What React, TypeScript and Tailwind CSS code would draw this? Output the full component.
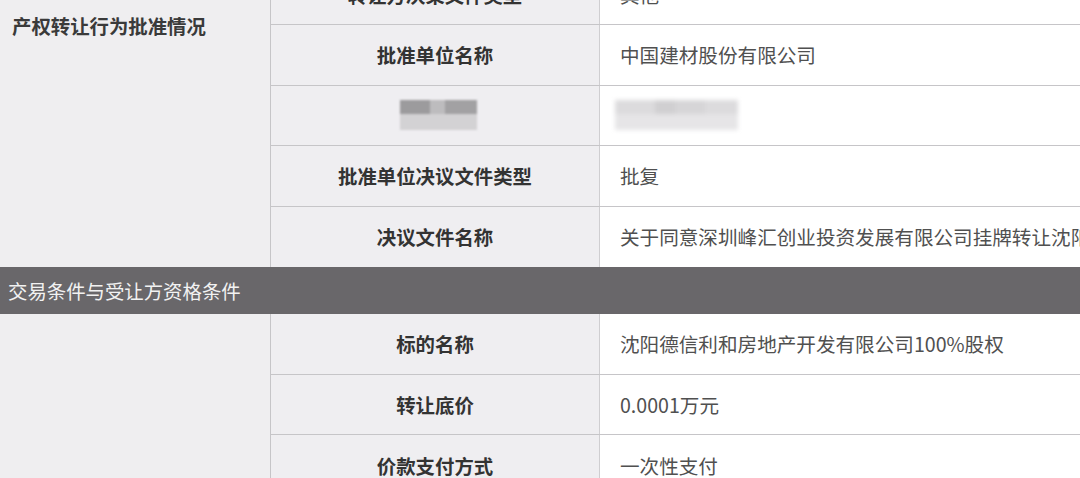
import React from 'react';

interface Row {
  label: string;
  value?: string;
  blurred?: boolean;
}

const approvalRows: Row[] = [
  { label: '转让方决策文件类型', value: '其他' },
  { label: '批准单位名称', value: '中国建材股份有限公司' },
  { label: '', blurred: true },
  { label: '批准单位决议文件类型', value: '批复' },
  { label: '决议文件名称', value: '关于同意深圳峰汇创业投资发展有限公司挂牌转让沈阳德信利和房地产开发有限公司100%股权的批复' },
];

const tradeRows: Row[] = [
  { label: '标的名称', value: '沈阳德信利和房地产开发有限公司100%股权' },
  { label: '转让底价', value: '0.0001万元' },
  { label: '价款支付方式', value: '一次性支付' },
];

const BlurredLabel = () => (
  <div className="flex flex-col w-[77px] h-[30px] blur-[1px] ml-[6px]">
    <div className="flex h-[14px]">
      <div className="w-[30px] bg-[#9c9b9d]" />
      <div className="w-[15px] bg-[#bdbcbe]" />
      <div className="w-[32px] bg-[#a2a1a3]" />
    </div>
    <div className="flex-1 bg-[#d3d2d4]" />
  </div>
);

const BlurredValue = () => (
  <div className="flex flex-col w-[123px] h-[30px] blur-[2px] -ml-[5px]">
    <div className="flex h-[14px]">
      <div className="w-[40px] bg-[#dcdbdd]" />
      <div className="w-[20px] bg-[#d0cfd1]" />
      <div className="w-[30px] bg-[#d6d5d7]" />
      <div className="w-[33px] bg-[#dcdbdd]" />
    </div>
    <div className="flex-1 bg-[#e6e5e7]" />
  </div>
);

const TableRow = ({ row, last }: { row: Row; last?: boolean }) => (
  <div className={`flex h-[60.5px] ${last ? '' : 'border-b border-[#c6c5c8]'}`}>
    <div className="w-[329px] flex items-center justify-center bg-[#efeef1] border-r border-[#cfced1] font-bold text-[#333] text-[19.4px]">
      {row.blurred ? <BlurredLabel /> : row.label}
    </div>
    <div className="flex-1 flex items-center pl-[20px] bg-white text-[#505050] text-[19.6px] whitespace-nowrap overflow-hidden">
      {row.blurred ? <BlurredValue /> : row.value}
    </div>
  </div>
);

const Section = ({ title, rows }: { title?: string; rows: Row[] }) => (
  <div className="flex">
    <div className="w-[271px] shrink-0 bg-[#efeef0] border-r border-[#c6c5c8] pl-[12px] pt-[50px]">
      {title && <div className="text-[19.4px] leading-[22px] font-bold text-[#3a3a3a]">{title}</div>}
    </div>
    <div className="flex-1 flex flex-col">
      {rows.map((row, i) => (
        <TableRow key={i} row={row} last={i === rows.length - 1} />
      ))}
    </div>
  </div>
);

export default function App() {
  return (
    <div className="w-[1080px] h-[478px] overflow-hidden bg-white font-['Noto_Sans_CJK_SC','Noto_Sans',sans-serif]">
      <div className="-mt-[35.5px]">
        <Section title="产权转让行为批准情况" rows={approvalRows} />
        <div className="h-[47px] flex items-center pl-[8px] bg-[#69676a] text-[#f2f2f2] text-[19.4px]">
          交易条件与受让方资格条件
        </div>
        <Section rows={tradeRows} />
      </div>
    </div>
  );
}
